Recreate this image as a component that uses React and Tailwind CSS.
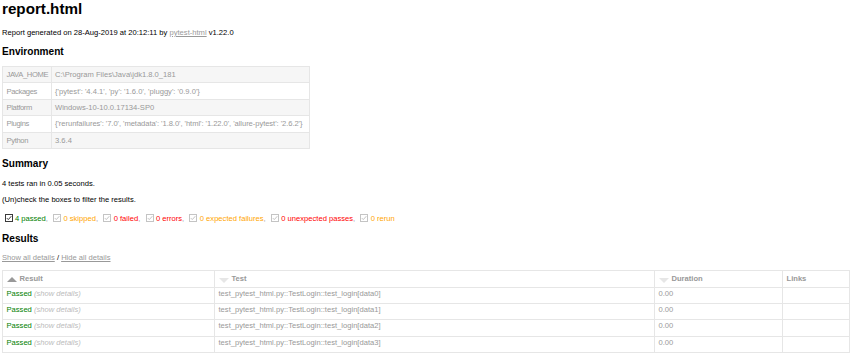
import React from "react";

function Check({ on }) {
  const c = on ? "#3a3a3a" : "#c4c4c4";
  return (
    <svg width="8" height="8" viewBox="0 0 8 8" className="inline-block align-[-1px] ml-[2.5px] mr-[2.4px]">
      <rect x="0.5" y="0.5" width="7" height="7" fill="#fff" stroke={c} strokeWidth="1" />
      <path d="M1.8 4.1 L3.3 5.6 L6.3 2.2" fill="none" stroke={c} strokeWidth="1" />
    </svg>
  );
}

function SortUp() {
  return (
    <span className="float-left mt-[3.5px] mr-[3px] w-0 h-0 border-l-[5px] border-r-[5px] border-b-[5px] border-l-transparent border-r-transparent border-b-[#999]" />
  );
}
function SortDown() {
  return (
    <span className="float-left mt-[4.5px] mr-[3px] w-0 h-0 border-l-[5px] border-r-[5px] border-t-[5px] border-l-transparent border-r-transparent border-t-[#e6e6e6]" />
  );
}

const env = [
  ["JAVA_HOME", "C:\\Program Files\\Java\\jdk1.8.0_181"],
  ["Packages", "{'pytest': '4.4.1', 'py': '1.6.0', 'pluggy': '0.9.0'}"],
  ["Platform", "Windows-10-10.0.17134-SP0"],
  ["Plugins", "{'rerunfailures': '7.0', 'metadata': '1.8.0', 'html': '1.22.0', 'allure-pytest': '2.6.2'}"],
  ["Python", "3.6.4"],
];

const filters = [
  ["4 passed", "text-[#008000]", true],
  ["0 skipped", "text-[#ffa500]", false],
  ["0 failed", "text-[#ff0000]", false],
  ["0 errors", "text-[#ff0000]", false],
  ["0 expected failures", "text-[#ffa500]", false],
  ["0 unexpected passes", "text-[#ff0000]", false],
  ["0 rerun", "text-[#ffa500]", false],
];

const cell = "border border-[#e6e6e6] px-[3.5px] py-0";

export default function App() {
  return (
    <div className="w-[850px] h-[354px] overflow-hidden bg-white pl-[2px] font-['Liberation_Sans',Arial,sans-serif] text-[7.6px] text-[#999]">
      <h1 className="mt-[2px] h-[13px] leading-[13px] text-[15.2px] font-bold text-black">report.html</h1>
      <p className="mt-[11px] h-[13px] leading-[13px] text-black">
        Report generated on 28-Aug-2019 at 20:12:11 by{" "}
        <a className="text-[#999] underline">pytest-html</a> v1.22.0
      </p>
      <h2 className="mt-[6px] h-[13px] leading-[13px] text-[10.1px] font-bold text-black">Environment</h2>
      <table className="mt-[8px] w-[308px] border-collapse table-fixed">
        <colgroup>
          <col className="w-[48.5px]" />
          <col />
        </colgroup>
        <tbody>
          {env.map(([k, v], i) => (
            <tr key={k} className={i % 2 === 0 ? "bg-[#f6f6f6]" : "bg-white"}>
              <td className={`${cell} h-[16.4px] leading-[9px] whitespace-nowrap tracking-[-0.35px]`}>{k}</td>
              <td className={`${cell} h-[16.4px] leading-[9px] whitespace-nowrap ${k === "Plugins" ? "tracking-[-0.06px]" : ""}`}>{v}</td>
            </tr>
          ))}
        </tbody>
      </table>
      <h2 className="mt-[8px] h-[13px] leading-[13px] text-[10.1px] font-bold text-black">Summary</h2>
      <p className="mt-[7px] h-[13px] leading-[13px] text-black">4 tests ran in 0.05 seconds.</p>
      <p className="mt-[3.5px] h-[13px] leading-[13px] text-black">(Un)check the boxes to filter the results.</p>
      <div className="mt-[6px] h-[13px] leading-[13px] whitespace-nowrap">
        {filters.map(([t, c, on], i) => (
          <React.Fragment key={t}>
            <Check on={on} />
            <span className={c}>{t}</span>
            {i < filters.length - 1 ? <span className="mr-[0.6px]">, </span> : null}
          </React.Fragment>
        ))}
      </div>
      <h2 className="mt-[6.5px] h-[13px] leading-[13px] text-[10.1px] font-bold text-black">Results</h2>
      <p className="mt-[6px] h-[13px] leading-[13px] text-black">
        <a className="text-[#999] underline">Show all details</a> /{" "}
        <a className="text-[#999] underline">Hide all details</a>
      </p>
      <table className="mt-[6.5px] w-[848px] border-collapse border border-[#e6e6e6] text-left">
        <thead>
          <tr>
            <th className={`${cell} w-[212px] h-[16.3px] leading-[12px] font-bold`}>
              <SortUp />Result
            </th>
            <th className={`${cell} w-[440px] h-[16.3px] leading-[12px] font-bold`}>
              <SortDown />Test
            </th>
            <th className={`${cell} w-[128px] h-[16.3px] leading-[12px] font-bold`}>
              <SortDown />Duration
            </th>
            <th className={`${cell} h-[16.3px] leading-[12px] font-bold`}>Links</th>
          </tr>
        </thead>
        <tbody>
          {[0, 1, 2, 3].map((n) => (
            <tr key={n}>
              <td className={`${cell} h-[16.3px] leading-[11.5px] align-top`}>
                <span className="text-[#008000]">Passed</span>
                <span className="italic text-[#bbb]"> (show details)</span>
              </td>
              <td className={`${cell} h-[16.3px] leading-[11.5px] align-top`}>
                test_pytest_html.py::TestLogin::test_login[data{n}]
              </td>
              <td className={`${cell} h-[16.3px] leading-[11.5px] align-top`}>0.00</td>
              <td className={`${cell} h-[16.3px] leading-[11.5px] align-top`}></td>
            </tr>
          ))}
        </tbody>
      </table>
    </div>
  );
}
